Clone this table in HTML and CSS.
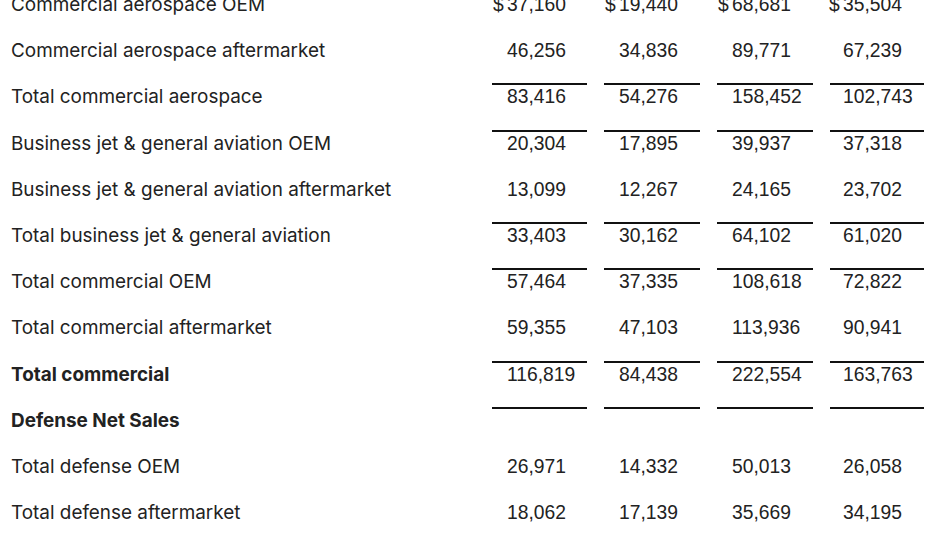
FILE: index.html
```html
<!DOCTYPE html>
<html>
<head>
<meta charset="utf-8">
<link rel="stylesheet" href="styles.css">
</head>
<body>
<div class="table">
  <div class="row"><div class="label">Commercial aerospace OEM</div><div class="val"><span class="cur">$</span>37,160</div><div class="val"><span class="cur">$</span>19,440</div><div class="val"><span class="cur">$</span>68,681</div><div class="val"><span class="cur">$</span>35,504</div></div>
  <div class="row"><div class="label">Commercial aerospace aftermarket</div><div class="val">46,256</div><div class="val">34,836</div><div class="val">89,771</div><div class="val">67,239</div></div>
  <div class="row ruled"><div class="label">Total commercial aerospace</div><div class="val">83,416</div><div class="val">54,276</div><div class="val">158,452</div><div class="val">102,743</div></div>
  <div class="row ruled"><div class="label">Business jet &amp; general aviation OEM</div><div class="val">20,304</div><div class="val">17,895</div><div class="val">39,937</div><div class="val">37,318</div></div>
  <div class="row"><div class="label">Business jet &amp; general aviation aftermarket</div><div class="val">13,099</div><div class="val">12,267</div><div class="val">24,165</div><div class="val">23,702</div></div>
  <div class="row ruled"><div class="label">Total business jet &amp; general aviation</div><div class="val">33,403</div><div class="val">30,162</div><div class="val">64,102</div><div class="val">61,020</div></div>
  <div class="row ruled"><div class="label">Total commercial OEM</div><div class="val">57,464</div><div class="val">37,335</div><div class="val">108,618</div><div class="val">72,822</div></div>
  <div class="row"><div class="label">Total commercial aftermarket</div><div class="val">59,355</div><div class="val">47,103</div><div class="val">113,936</div><div class="val">90,941</div></div>
  <div class="row ruled"><div class="label bold">Total commercial</div><div class="val">116,819</div><div class="val">84,438</div><div class="val">222,554</div><div class="val">163,763</div></div>
  <div class="row ruled"><div class="label bold">Defense Net Sales</div><div class="val"></div><div class="val"></div><div class="val"></div><div class="val"></div></div>
  <div class="row"><div class="label">Total defense OEM</div><div class="val">26,971</div><div class="val">14,332</div><div class="val">50,013</div><div class="val">26,058</div></div>
  <div class="row"><div class="label">Total defense aftermarket</div><div class="val">18,062</div><div class="val">17,139</div><div class="val">35,669</div><div class="val">34,195</div></div>
</div>
</body>
</html>
```
FILE: styles.css
```css
html, body {
  margin: 0;
  padding: 0;
  background: #ffffff;
}
body {
  overflow: hidden;
  color: #222222;
}
.table {
  margin-top: -9px;
}
.row {
  display: grid;
  grid-template-columns: 475px 95px 96px 96px 94px;
  column-gap: 17px;
  height: 46.2px;
}
.label {
  padding-left: 11px;
  font-family: "Inter", "Noto Sans", sans-serif;
  font-size: 18.9px;
  line-height: 24px;
  border-top: 2px solid transparent;
  white-space: nowrap;
}
.label.bold {
  font-weight: 700;
}
.val {
  font-family: "Liberation Sans", Arial, sans-serif;
  font-size: 19.3px;
  line-height: 24px;
  padding-left: 15px;
  border-top: 2px solid transparent;
  white-space: nowrap;
}
.val:last-child {
  padding-left: 13px;
}
.ruled .val {
  border-top-color: #111111;
}
.cur {
  display: inline-block;
  width: 14px;
  margin-left: -14px;
}
```
